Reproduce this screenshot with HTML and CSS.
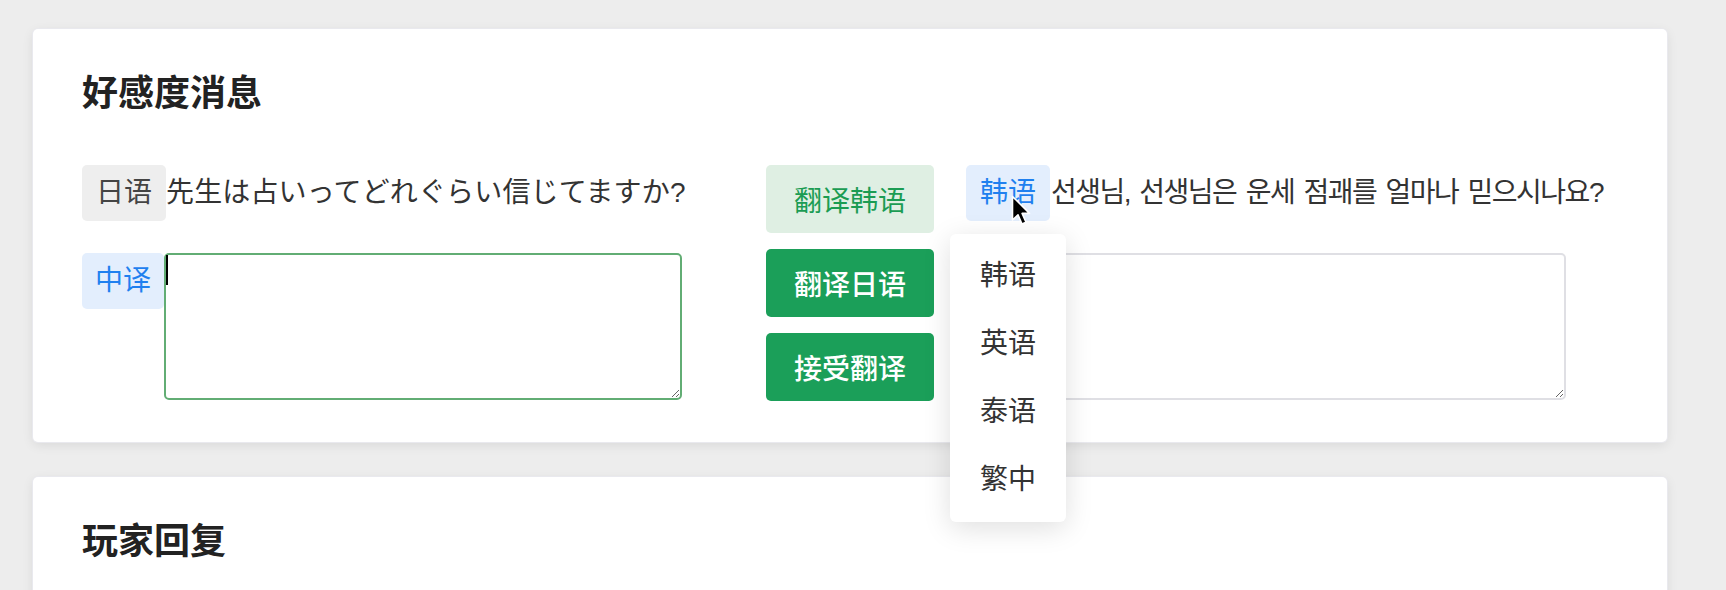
FILE: index.html
```html
<!DOCTYPE html>
<html lang="zh-CN">
<head>
<meta charset="utf-8">
<title>好感度消息</title>
<link rel="stylesheet" href="styles.css">
</head>
<body>
<main class="page">
  <section class="card">
    <h2 class="card-title">好感度消息</h2>
    <div class="translate-row">
      <div class="lang-col">
        <div class="line">
          <span class="tag tag-gray">日语</span>
          <span class="src src-ja" lang="ja">先生は占いってどれぐらい信じてますか?</span>
        </div>
        <div class="line line-edit">
          <span class="tag tag-blue tag-narrow">中译</span>
          <div class="ta-wrap">
            <textarea class="ta ta-active"></textarea>
            <span class="caret"></span>
          </div>
        </div>
      </div>

      <div class="btn-col">
        <button class="btn btn-light">翻译韩语</button>
        <button class="btn btn-solid">翻译日语</button>
        <button class="btn btn-solid">接受翻译</button>
      </div>

      <div class="lang-col">
        <div class="line">
          <div class="tag-wrap">
            <span class="tag tag-blue">韩语</span>
            <ul class="menu">
              <li class="menu-item">韩语</li>
              <li class="menu-item">英语</li>
              <li class="menu-item">泰语</li>
              <li class="menu-item">繁中</li>
            </ul>
            <svg class="pointer" width="22" height="32" viewBox="0 0 22 32" aria-hidden="true">
              <path d="M1.5 1.5 L1.5 25 L7 19.8 L11 29 L15 27.3 L11.1 18.4 L18.5 18.4 Z" fill="#000" stroke="#fff" stroke-width="1.6" stroke-linejoin="round"/>
            </svg>
          </div>
          <span class="src src-ko" lang="ko">선생님, 선생님은 운세 점괘를 얼마나 믿으시나요?</span>
        </div>
        <div class="line line-edit">
          <span class="tag-spacer"></span>
          <div class="ta-wrap">
            <textarea class="ta"></textarea>
          </div>
        </div>
      </div>
    </div>
  </section>

  <section class="card card-tall">
    <h2 class="card-title">玩家回复</h2>
  </section>
</main>
</body>
</html>
```

FILE: styles.css
```css
* {
  box-sizing: border-box;
}

html, body {
  margin: 0;
  padding: 0;
}

body {
  background: #ededed;
  font-family: "Liberation Sans", "Noto Sans CJK SC", sans-serif;
  color: #333;
  overflow: hidden;
}

.page {
  width: 1634px;
  margin-left: 33px;
  padding-top: 29px;
  display: flex;
  flex-direction: column;
  gap: 35px;
}

.card {
  background: #fff;
  border-radius: 5px;
  box-shadow: 0 0 0 1px #e9e9ee, 0 3px 12px rgba(0, 0, 0, 0.09);
  padding: 43px 48px 41px 49px;
}

.card-tall {
  min-height: 300px;
}

.card-title {
  margin: 0 0 49px 0;
  font-size: 36px;
  line-height: 44px;
  font-weight: 700;
  color: #222;
}

.translate-row {
  display: flex;
  align-items: flex-start;
}

.lang-col {
  width: 600px;
  display: flex;
  flex-direction: column;
  gap: 32px;
}

.line {
  display: flex;
  align-items: center;
}

.line-edit {
  align-items: flex-start;
}

.tag {
  display: inline-block;
  flex: none;
  width: 84px;
  height: 56px;
  line-height: 56px;
  text-align: center;
  font-size: 28px;
  border-radius: 5px;
}

.tag-narrow {
  width: 82px;
}

.tag-spacer {
  flex: none;
  width: 84px;
}

.tag-gray {
  background: #eeeeee;
  color: #444;
}

.tag-blue {
  background: #e3eefd;
  color: #1f80ef;
}

.src {
  font-size: 28px;
  line-height: 40px;
  color: #333;
  white-space: nowrap;
}

.src-ja {
  font-family: "Liberation Sans", "Noto Sans CJK JP", sans-serif;
  letter-spacing: 0.15px;
}

.src-ko {
  font-family: "Liberation Sans", "Noto Sans CJK KR", sans-serif;
  letter-spacing: -1.5px;
  word-spacing: 3px;
  padding-left: 1px;
}

.ta-wrap {
  position: relative;
  flex: 1;
}

.ta {
  display: block;
  width: 100%;
  height: 147px;
  margin: 0;
  padding: 4px 6px;
  border: 2px solid #dfdfe4;
  border-radius: 5px;
  font-family: inherit;
  font-size: 24px;
  background: #fff;
  outline: none;
  resize: vertical;
}

.ta-active {
  border-color: #62ad74;
}

.caret {
  position: absolute;
  left: 2px;
  top: 2px;
  width: 2px;
  height: 30px;
  background: #000;
}

.btn-col {
  margin-left: 84px;
  margin-right: 32px;
  width: 168px;
  display: flex;
  flex-direction: column;
  gap: 16px;
}

.btn {
  display: block;
  width: 168px;
  height: 68px;
  border: none;
  border-radius: 5px;
  font-family: inherit;
  font-size: 28px;
  padding: 0;
  cursor: pointer;
}

.btn-light {
  background: #dfefe3;
  color: #1b9c53;
}

.btn-solid {
  background: #1b9f59;
  color: #fff;
  font-weight: 500;
}

.tag-wrap {
  position: relative;
  flex: none;
}

.menu {
  position: absolute;
  left: -16px;
  top: 69px;
  width: 116px;
  margin: 0;
  padding: 8px 0;
  list-style: none;
  background: #fff;
  border-radius: 6px;
  box-shadow: 0 6px 28px rgba(0, 0, 0, 0.13);
  z-index: 5;
}

.menu-item {
  height: 68px;
  line-height: 68px;
  text-align: center;
  font-size: 28px;
  color: #333;
}

.pointer {
  position: absolute;
  left: 45px;
  top: 30px;
  z-index: 6;
}
```
